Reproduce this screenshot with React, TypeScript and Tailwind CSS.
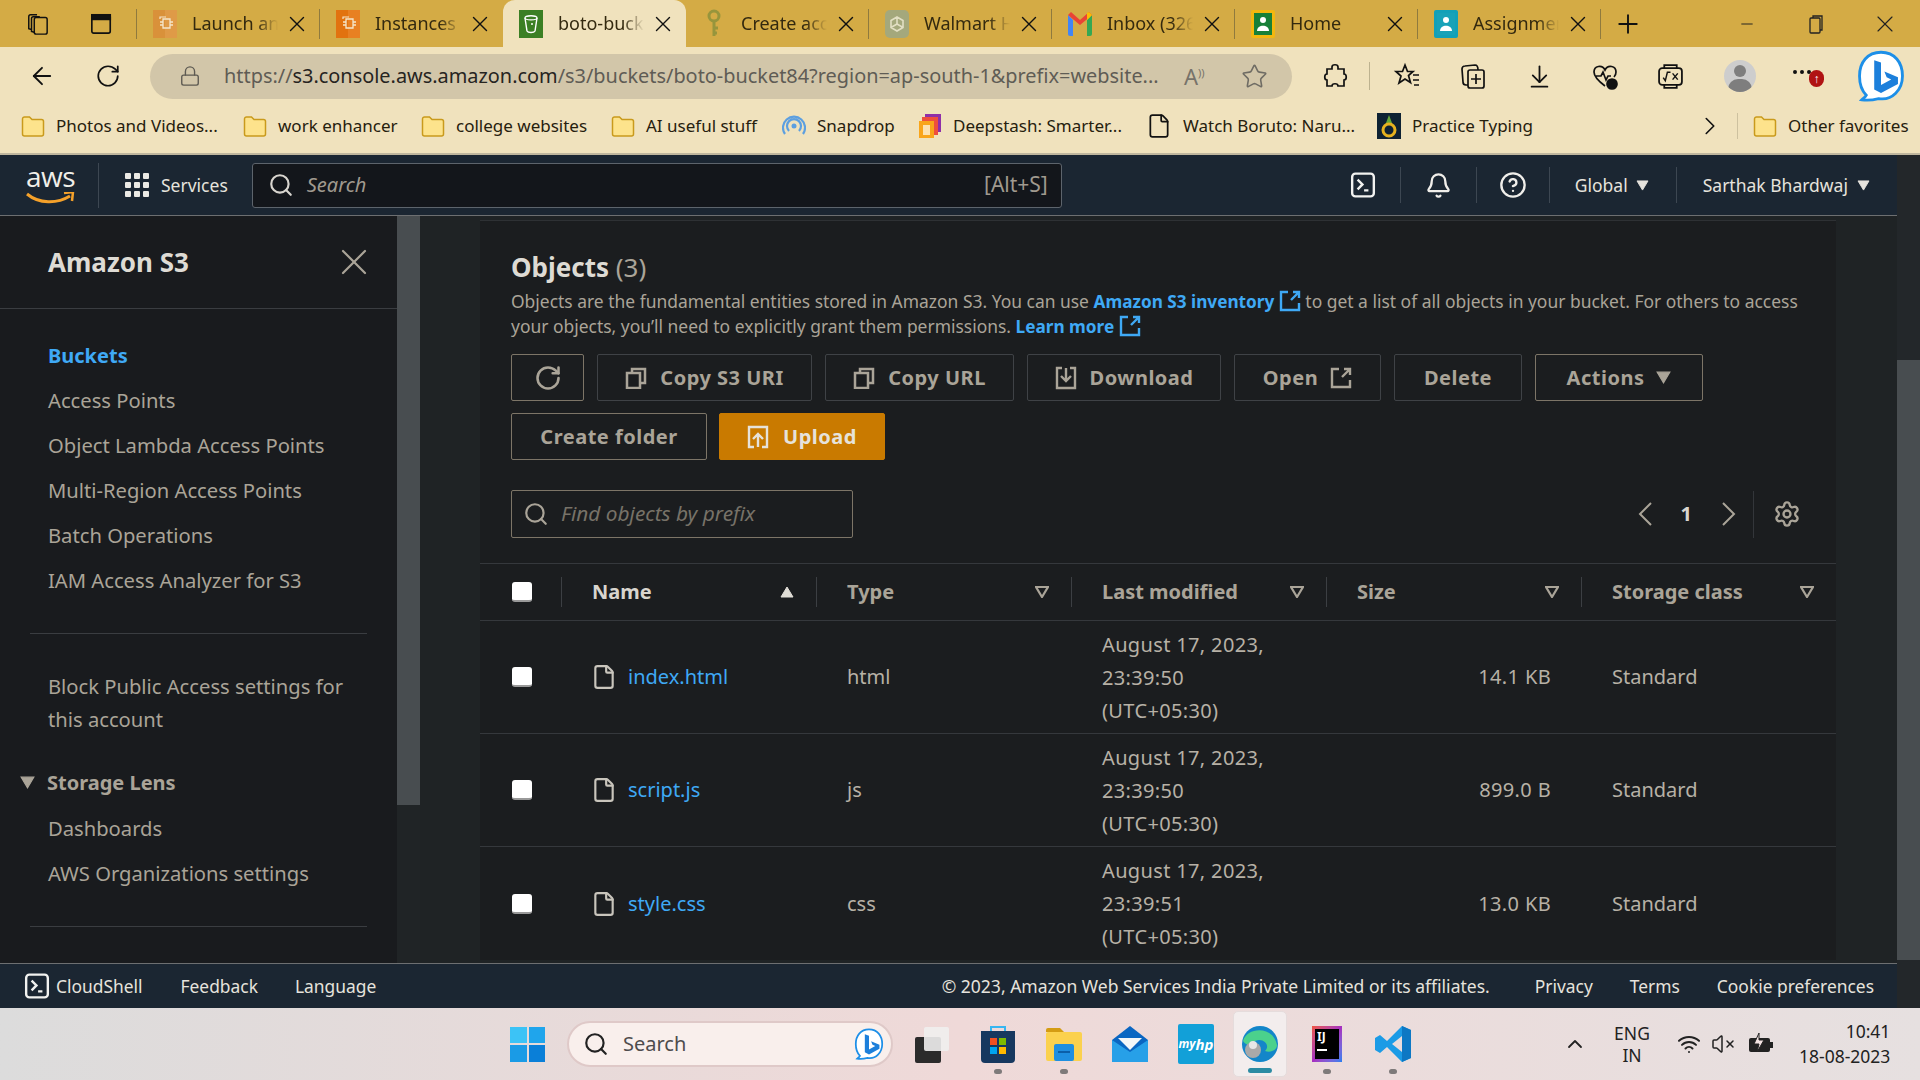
import React from "react";
import {
  ArrowLeft, RotateCw, Lock, Star, ArrowDownToLine, Search, Bell, CircleHelp, X,
  Settings, ChevronRight, File, Plus, Minus, ChevronUp, Wifi, VolumeX, Ellipsis,
} from "lucide-react";

const Tri = ({ up = false, hollow = false, s = 14, c = "#aaa498" }: { up?: boolean; hollow?: boolean; s?: number; c?: string }) => (
  <svg width={s} height={s - 2} viewBox="0 0 14 12" className="shrink-0">
    <polygon points={up ? "7,1 13,11 1,11" : "1,1 13,1 7,11"} fill={hollow ? "none" : c} stroke={c} strokeWidth={hollow ? 2.2 : 1} />
  </svg>
);

const Chip = ({ c1, c2 }: { c1: string; c2: string }) => (
  <svg width="24" height="28" viewBox="0 0 24 28" className="shrink-0">
    <rect width="24" height="28" fill={c1} />
    <rect x="12" width="12" height="28" fill={c2} opacity="0.6" />
    <path d="M10 9h7v9h-7zM7 12h3M7 15h3M17 12h3M17 15h3" stroke="#f5e6cc" strokeWidth="1.3" fill="none" />
    <path d="M7 9V7h6" stroke="#f5e6cc" strokeWidth="1.2" fill="none" />
  </svg>
);
const S3Icon = () => (
  <svg width="24" height="28" viewBox="0 0 24 28" className="shrink-0">
    <rect width="24" height="28" fill="#3b7f24" />
    <path d="M6 8c0-3 12-3 12 0l-2 13c-1 2-7 2-8 0z" fill="none" stroke="#fff" strokeWidth="1.4" />
    <path d="M6 8c0 2.500 12 2.500 12 0" stroke="#fff" strokeWidth="1.2" fill="none" />
    <circle cx="13" cy="14" r="1" fill="#fff" />
  </svg>
);
const KeyIcon = () => (
  <svg width="20" height="30" viewBox="0 0 20 30" className="shrink-0">
    <circle cx="10" cy="7" r="5" fill="none" stroke="#97953c" strokeWidth="3" />
    <path d="M10 12v15M10 19h4M10 24h3" stroke="#97953c" strokeWidth="3" />
  </svg>
);
const GptIcon = () => (
  <svg width="24" height="28" viewBox="0 0 24 28" className="shrink-0">
    <rect width="24" height="28" rx="5" fill="#a4a87c" />
    <path d="M12 7l6 3.500v7L12 21l-6-3.500v-7zM12 7v7l6 3.500M12 14l-6 3.500" fill="none" stroke="#e2dfc3" strokeWidth="1.6" />
  </svg>
);
const GmailIcon = () => (
  <svg width="24" height="24" viewBox="0 0 24 24" className="shrink-0">
    <path d="M0 3v19a2 2 0 0 0 2 2h3V8z" fill="#4285f4" />
    <path d="M24 3v19a2 2 0 0 1-2 2h-3V8z" fill="#34a853" />
    <path d="M0 3l12 10 12-10-3-3-9 8-9-8z" fill="#ea4335" />
    <path d="M19 8l5-5-3-3-2 1z" fill="#fbbc04" />
  </svg>
);
const ClassIcon = ({ c, b }: { c: string; b: string }) => (
  <svg width="24" height="28" viewBox="0 0 24 28" className="shrink-0">
    <rect width="24" height="28" rx="2" fill={b} />
    <rect x="3" y="3" width="18" height="22" fill={c} />
    <circle cx="12" cy="10" r="3" fill="#fff" />
    <path d="M6 21c0-7 12-7 12 0z" fill="#fff" />
  </svg>
);

const Fade = "[mask-image:linear-gradient(to_right,black_75%,transparent)]";

const Tab = ({ icon, label, active = false, sep = true }: { icon: React.ReactNode; label: string; active?: boolean; sep?: boolean }) => (
  <div className={`w-[183px] h-[47px] shrink-0 flex items-center pl-4 pr-[10px] ${active ? "bg-[#f0e2bd] rounded-t-xl" : ""}`}>
    <div className="w-[24px] flex justify-center shrink-0">{icon}</div>
    <span className={`ml-[15px] w-[86px] overflow-hidden whitespace-nowrap text-[18px] text-[#33290f] ${Fade}`}>{label}</span>
    <X size={26} strokeWidth={1.3} className="ml-auto text-[#111]" />
    {sep && <div className="w-px h-[30px] bg-[#8f7a3e] ml-[9px] -mr-[10px] shrink-0" />}
  </div>
);

const FolderIcon = () => (
  <svg width="24" height="24" viewBox="0 0 24 24" className="shrink-0">
    <path d="M1.500 5a2 2 0 0 1 2-2h5l2.500 2.500h9.500a2 2 0 0 1 2 2V20a2 2 0 0 1-2 2h-17a2 2 0 0 1-2-2z" fill="#fde38c" stroke="#c99a1c" strokeWidth="1.5" />
  </svg>
);

const Book = ({ icon, label, w }: { icon: React.ReactNode; label: string; w: string }) => (
  <div className={`flex items-center gap-[11px] shrink-0 ${w}`}>
    {icon}
    <span className="text-[17px] text-[#26200e] whitespace-nowrap">{label}</span>
  </div>
);

const Bing = ({ s = 46 }: { s?: number }) => (
  <svg width={s} height={s} viewBox="0 0 46 46" className="shrink-0">
    <path d="M23 2C11 2 4 11 4 23c0 7 2 13 6 17-1 2-3 3-4 4 6 1 11 0 15-1 12 2 21-8 21-20S35 2 23 2z" fill="#fff" stroke="#1d8fe8" strokeWidth="2.5" />
    <path d="M17 9l6 2v20l9-5-4-2-2-5 12 5v6l-15 8-6-3z" fill="#1c7fdb" />
  </svg>
);

const Divider = ({ h = "h-[30px]", c = "bg-[#3d4752]" }: { h?: string; c?: string }) => <div className={`w-px ${h} ${c} shrink-0`} />;

const Terminal = ({ s = 26 }: { s?: number }) => (
  <svg width={s} height={s} viewBox="0 0 24 24" className="shrink-0" fill="none" stroke="#f2f2f0" strokeWidth="2.200">
    <rect x="2" y="1.500" width="20" height="21" rx="3" />
    <path d="M7 7l4.500 4.500L7 16M13 17h4" />
  </svg>
);

const Nav = ({ children, active = false }: { children: React.ReactNode; active?: boolean }) => (
  <div className={`h-[45px] flex items-center pl-[48px] whitespace-nowrap ${active ? "font-bold text-[#3fa9f5] text-[20px]" : "text-[#aaa498] text-[20.2px]"}`}>{children}</div>
);

const CopyIco = () => (
  <svg width="22" height="22" viewBox="0 0 22 22" fill="none" stroke="#aaa498" strokeWidth="2.500" className="shrink-0">
    <path d="M7 5V2h13v14h-4" /><rect x="2" y="6" width="13" height="15" />
  </svg>
);
const ExtIco = ({ c = "#aaa498", s = 22 }: { c?: string; s?: number }) => (
  <svg width={s} height={s} viewBox="0 0 22 22" fill="none" stroke={c} strokeWidth="2.400" className="shrink-0 inline-block align-[-4px]">
    <path d="M9 2H2v18h18v-7M12 10l8-8M14 2h6v6" />
  </svg>
);

const Btn = ({ w, children, strong = false, primary = false, gap = "gap-[12px]" }: { w: string; children: React.ReactNode; strong?: boolean; primary?: boolean; gap?: string }) => (
  <div className={`${w} ${gap} h-[47px] shrink-0 rounded-[2px] border flex items-center justify-center text-[20px] tracking-[0.5px] font-bold ${primary ? "bg-[#c97a00] border-[#c97a00] text-[#e6e2da]" : strong ? "border-[#7d7567] text-[#aaa498]" : "border-[#3f4246] text-[#aaa498]"}`}>
    {children}
  </div>
);

const Head = ({ label, up = false }: { label: string; up?: boolean }) => (
  <div className="flex items-center justify-between h-[30px] border-l border-[#3c3f43] pl-[30px] pr-[22px]">
    <span className={`text-[20px] font-bold ${up ? "text-[#d8d5ce]" : "text-[#aaa498]"}`}>{label}</span>
    {up ? <Tri up c="#e0ddd6" /> : <Tri hollow />}
  </div>
);

const Check = () => <div className="w-[20px] h-[20px] bg-white rounded-[3px] border-b-2 border-[#999]" />;

const rows = [
  { n: "index.html", t: "html", d: "23:39:50", s: "14.1 KB" },
  { n: "script.js", t: "js", d: "23:39:50", s: "899.0 B" },
  { n: "style.css", t: "css", d: "23:39:51", s: "13.0 KB" },
];

const Row = ({ r, last }: { r: (typeof rows)[number]; last: boolean }) => (
  <div className={`grid grid-cols-[81px_repeat(5,255px)] items-center text-[20px] text-[#b7b1a6] h-[113px] ${last ? "" : "border-b border-[#35383c]"}`}>
    <div className="pl-[32px]"><Check /></div>
    <div className="pl-[30px] flex items-center gap-[11px]">
      <File size={26} strokeWidth={2} className="text-[#c9c5bc]" />
      <span className="text-[#3fa9f5]">{r.n}</span>
    </div>
    <div className="pl-[31px]">{r.t}</div>
    <div className="pl-[31px] leading-[33px] tracking-[0.35px]">August 17, 2023,<br />{r.d}<br />(UTC+05:30)</div>
    <div className="pr-[30px] text-right tracking-[0.35px]">{r.s}</div>
    <div className="pl-[31px]">Standard</div>
  </div>
);

const Task = ({ w = "w-[66px]", children, dot = false }: { w?: string; children: React.ReactNode; dot?: boolean }) => (
  <div className={`${w} h-[72px] relative shrink-0 flex items-center justify-center`}>
    {children}
    {dot && <div className="absolute bottom-[6px] left-1/2 -ml-[4px] w-[8px] h-[5px] rounded-full bg-[#7e7a7a]" />}
  </div>
);

export default function App() {
  return (
    <div className="w-[1920px] h-[1080px] overflow-hidden flex flex-col font-['Noto_Sans',sans-serif]">
      {/* tab strip */}
      <div className="h-[47px] shrink-0 bg-[#d4ab45] flex items-center">
        <div className="w-[137px] h-[47px] shrink-0 flex items-center pl-[26px] gap-[40px]">
          <svg width="26" height="26" viewBox="0 0 26 26" fill="none" stroke="#111" strokeWidth="1.600"><rect x="9" y="6" width="14" height="18" rx="2" /><path d="M9 22l-3-1V7a2 2 0 0 1 2-2h7M6 19l-3-1V5a2 2 0 0 1 2-2h7" /></svg>
          <svg width="24" height="26" viewBox="0 0 24 26" fill="none" stroke="#111" strokeWidth="1.800"><rect x="2" y="3" width="20" height="20" rx="2" /><rect x="2" y="3" width="20" height="5" fill="#111" /></svg>
          <div className="w-px h-[30px] bg-[#8f7a3e] -ml-[16px] shrink-0" />
        </div>
        <Tab icon={<Chip c1="#d9913a" c2="#e3a050" />} label="Launch an" />
        <Tab icon={<Chip c1="#e2720f" c2="#ec8a2e" />} label="Instances |" sep={false} />
        <Tab active icon={<S3Icon />} label="boto-bucket" sep={false} />
        <Tab icon={<KeyIcon />} label="Create acco" />
        <Tab icon={<GptIcon />} label="Walmart H" />
        <Tab icon={<GmailIcon />} label="Inbox (326)" />
        <Tab icon={<ClassIcon c="#188038" b="#f3b70f" />} label="Home" />
        <Tab icon={<ClassIcon c="#18a2b8" b="#12a0b8" />} label="Assignment" />
        <Plus size={30} strokeWidth={1.5} className="ml-[12px] text-[#111]" />
        <Minus size={18} strokeWidth={1.3} className="ml-[95px] text-[#222]" />
        <svg width="16" height="20" viewBox="0 0 16 20" fill="none" stroke="#222" strokeWidth="1.300" className="ml-[52px]"><rect x="2" y="4" width="10" height="15" rx="1" /><path d="M5 4V2h9v14h-2" /></svg>
        <X size={28} strokeWidth={1} className="ml-[47px] text-[#222]" />
      </div>

      {/* toolbar */}
      <div className="h-[58px] shrink-0 bg-[#f0e2bd] flex items-center pl-[28px]">
        <ArrowLeft size={28} strokeWidth={1.6} className="text-[#111]" />
        <RotateCw size={26} strokeWidth={1.6} className="ml-[39px] text-[#111]" />
        <div className="ml-[29px] w-[1142px] h-[45px] rounded-full bg-[#d2c6a9] flex items-center pl-[29px]">
          <Lock size={22} strokeWidth={1.5} className="text-[#5d5a52]" />
          <span className="ml-[23px] w-[945px] text-[19.9px] text-[#5f5c55] whitespace-nowrap overflow-hidden"><span className="text-[#5f5c55]">https://</span><span className="text-[#26241f]">s3.console.aws.amazon.com</span>/s3/buckets/boto-bucket84?region=ap-south-1&amp;prefix=website...</span>
          <span className="ml-[15px] text-[22px] text-[#77736a] leading-none">A<span className="text-[11px] align-super">))</span></span>
          <Star size={27} strokeWidth={1.4} className="ml-[36px] text-[#6f6c64]" />
        </div>
        <svg width="25" height="27" viewBox="0 0 25 27" fill="none" stroke="#111" strokeWidth="1.700" className="ml-[31px] shrink-0"><path d="M9 4c0-3 6-3 6 0v2h6v5c3 0 3 6 0 6v6h-6c0-3-6-3-6 0H4v-6c-3 0-3-6 0-6V6h5z" /></svg>
        <div className="ml-[21px]"><Divider h="h-[28px]" c="bg-[#bdb28f]" /></div>
        <svg width="28" height="28" viewBox="0 0 28 28" fill="none" stroke="#111" strokeWidth="1.700" className="ml-[23px] shrink-0"><path d="M12 3l2.500 6.500H20l-4.500 4 2 7L12 17l-6 4 2-7-5-4.500h6.500zM20 13h6M20 18h6M21 23h5" /></svg>
        <svg width="28" height="28" viewBox="0 0 28 28" fill="none" stroke="#111" strokeWidth="1.700" className="ml-[38px] shrink-0"><rect x="9" y="8" width="16" height="18" rx="2" /><path d="M9 23H7a3 3 0 0 1-3-3L3 7a3 3 0 0 1 3-3l10-1c2 0 3 2 3 5M17 12v10M12 17h10" /></svg>
        <ArrowDownToLine size={27} strokeWidth={1.6} className="ml-[39px] text-[#111]" />
        <svg width="27" height="27" viewBox="0 0 27 27" fill="none" stroke="#111" strokeWidth="1.700" className="ml-[39px] shrink-0"><path d="M13 23C5 17 2 13 2 9c0-6 8-8 11-2 3-6 11-4 11 2 0 2-1 4-2 5M3 13h6l2-4 3 8 2-4h3" /><circle cx="20" cy="21" r="5" fill="#111" /></svg>
        <svg width="27" height="27" viewBox="0 0 26 26" fill="none" stroke="#111" strokeWidth="1.700" className="ml-[38px] shrink-0"><rect x="2" y="5" width="22" height="16" rx="3" /><path d="M7 5V2h12v3M7 21v3h12v-3" /><path d="M6 14l2 3 2-8h3M15 10l5 6M20 10l-5 6" strokeWidth="1.400" /></svg>
        <div className="ml-[40px] w-[32px] h-[32px] rounded-full bg-[#cdcdcd] relative overflow-hidden shrink-0">
          <div className="absolute left-[10px] top-[5px] w-[12px] h-[12px] rounded-full bg-[#7e7e7e]" />
          <div className="absolute left-[4px] top-[19px] w-[24px] h-[20px] rounded-full bg-[#7e7e7e]" />
        </div>
        <div className="ml-[37px] relative w-[40px] h-[34px] shrink-0">
          <Ellipsis size={24} className="absolute left-[-3px] top-[1px] text-[#111]" />
          <div className="absolute left-[16px] top-[11px] w-[15px] h-[17px] rounded-full bg-[#b01313] text-white text-[12px] font-bold flex items-center justify-center">↑</div>
        </div>
        <div className="ml-[22px]"><Bing s={52} /></div>
      </div>

      {/* bookmarks */}
      <div className="h-[50px] shrink-0 bg-[#f0e2bd] border-b-2 border-[#bfb69e] flex items-center pl-[21px] pb-[6px]">
        <Book w="w-[222px]" icon={<FolderIcon />} label="Photos and Videos..." />
        <Book w="w-[178px]" icon={<FolderIcon />} label="work enhancer" />
        <Book w="w-[190px]" icon={<FolderIcon />} label="college websites" />
        <Book w="w-[171px]" icon={<FolderIcon />} label="AI useful stuff" />
        <Book w="w-[136px]" icon={
          <svg width="24" height="26" viewBox="0 0 24 26" fill="none" stroke="#5c9fe0" strokeWidth="2.200" className="shrink-0"><path d="M3 21a11 11 0 1 1 18 0M7 18a7 7 0 1 1 10 0" /><circle cx="12" cy="13" r="2.500" fill="#5c9fe0" stroke="none" /></svg>
        } label="Snapdrop" />
        <Book w="w-[228px]" icon={
          <svg width="24" height="26" viewBox="0 0 24 26" className="shrink-0"><rect x="7" y="1" width="16" height="18" fill="#8f2fa8" /><rect x="4" y="4" width="16" height="18" fill="#ef4f3c" /><rect x="1" y="8" width="15" height="17" fill="#f9a51a" /><rect x="5" y="12" width="7" height="10" fill="#fde2b0" /></svg>
        } label="Deepstash: Smarter..." />
        <Book w="w-[231px]" icon={<File size={26} strokeWidth={1.6} className="text-[#111]" />} label="Watch Boruto: Naru..." />
        <Book w="w-[318px]" icon={
          <svg width="24" height="26" viewBox="0 0 24 26" className="shrink-0"><rect width="24" height="26" fill="#0e2233" /><path d="M12 2l3 8h-6z" fill="#65a83a" /><circle cx="12" cy="17" r="6" fill="none" stroke="#e5b21f" strokeWidth="3" /></svg>
        } label="Practice Typing" />
        <ChevronRight size={30} strokeWidth={1.3} className="text-[#111]" />
        <div className="ml-[12px]"><Divider h="h-[26px]" c="bg-[#cdc19f]" /></div>
        <div className="ml-[15px]"><Book w="w-auto" icon={<FolderIcon />} label="Other favorites" /></div>
      </div>

      {/* page */}
      <div className="flex-1 min-h-0 flex bg-[#23272a]">
        <div className="w-[1897px] shrink-0 flex flex-col">
          {/* aws header */}
          <div className="h-[61px] shrink-0 bg-[#1b2632] border-b border-[#6d6f71] flex items-center text-[#e6e3dd]">
            <div className="w-[99px] h-[45px] shrink-0 border-r border-[#3d4752] pl-[26px] relative">
              <span className="block text-[28px] leading-[27px] text-[#f1efe9] tracking-[-0.5px] font-['Open_Sans',sans-serif]">aws</span>
              <svg width="50" height="14" viewBox="0 0 50 14" className="absolute left-[25px] top-[29px]"><path d="M2 2c12 10 30 10 43 2" fill="none" stroke="#f5a12a" strokeWidth="3" /><path d="M39 1l9-1-1 9" fill="none" stroke="#f5a12a" strokeWidth="2.500" /></svg>
            </div>
            <div className="ml-[26px] w-[24px] h-[24px] grid grid-cols-3 gap-[2.500px] shrink-0">
              {Array.from({ length: 9 }).map((_, i) => <div key={i} className="bg-[#eceae5] rounded-[1px]" />)}
            </div>
            <span className="ml-[12px] text-[17.5px] whitespace-nowrap">Services</span>
            <div className="ml-[24px] w-[810px] h-[45px] shrink-0 rounded-[3px] bg-[#13161b] border border-[#5d646c] flex items-center pl-[15px] pr-[13px]">
              <Search size={26} strokeWidth={2} className="text-[#d8d5cf]" />
              <span className="ml-[13px] italic text-[20px] text-[#a09a8f]">Search</span>
              <span className="ml-auto text-[21px] text-[#a09a8f]">[Alt+S]</span>
            </div>
            <div className="ml-[288px]"><Terminal /></div>
            <div className="ml-[24px]"><Divider h="h-[36px]" /></div>
            <Bell size={27} strokeWidth={2} className="ml-[24px] text-[#f0eeea]" />
            <div className="ml-[24px]"><Divider h="h-[36px]" /></div>
            <CircleHelp size={28} strokeWidth={2} className="ml-[22px] text-[#f0eeea]" />
            <div className="ml-[22px]"><Divider h="h-[36px]" /></div>
            <span className="ml-[25px] text-[17.5px]">Global</span>
            <div className="ml-[8px]"><Tri s={13} c="#e6e3dd" /></div>
            <div className="ml-[27px]"><Divider h="h-[36px]" /></div>
            <span className="ml-[26px] text-[17.5px] whitespace-nowrap">Sarthak Bhardwaj</span>
            <div className="ml-[9px]"><Tri s={13} c="#e6e3dd" /></div>
          </div>

          {/* console body */}
          <div className="flex-1 min-h-0 flex">
            <div className="w-[397px] shrink-0 bg-[#191b1e]">
              <div className="h-[93px] border-b border-[#3a3d41] flex items-center justify-between pl-[48px] pr-[21px]">
                <span className="text-[26px] font-bold text-[#dedbd4]">Amazon S3</span>
                <X size={44} strokeWidth={1.2} className="text-[#aaa498]" />
              </div>
              <div className="mt-[24px]">
                <Nav active>Buckets</Nav>
                <Nav>Access Points</Nav>
                <Nav>Object Lambda Access Points</Nav>
                <Nav>Multi-Region Access Points</Nav>
                <Nav>Batch Operations</Nav>
                <Nav>IAM Access Analyzer for S3</Nav>
              </div>
              <div className="mx-[30px] mt-[30px] border-t border-[#3a3d41]" />
              <div className="mt-[36px] pl-[48px] text-[20.2px] leading-[33px] text-[#aaa498]">Block Public Access settings for<br />this account</div>
              <div className="mt-[30px] h-[33px] flex items-center pl-[20px] gap-[12px] text-[20px] font-bold text-[#aaa498]"><Tri s={15} />Storage Lens</div>
              <div className="mt-[7px]">
                <Nav>Dashboards</Nav>
                <Nav>AWS Organizations settings</Nav>
              </div>
              <div className="mx-[30px] mt-[30px] border-t border-[#3a3d41]" />
            </div>
            <div className="w-[23px] shrink-0 bg-[#202426]">
              <div className="h-[589px] bg-[#484d50]" />
            </div>
            <div className="w-[60px] shrink-0 bg-[#1f2325]" />
            <div className="w-[1356px] shrink-0 bg-[#1f2325] pt-[4px]">
              <div className="h-[740px] bg-[#1b1d1f] border-t border-[#2e3134] overflow-hidden">
                <div className="pl-[31px] pr-[30px] pt-[29px]">
                  <div className="text-[26px] leading-[34px] font-bold text-[#dedbd4]">Objects <span className="font-normal text-[#aaa498]">(3)</span></div>
                  <p className="mt-[5px] text-[17.45px] leading-[25px] text-[#aaa498]">
                    Objects are the fundamental entities stored in Amazon S3. You can use <span className="font-bold text-[#3fa9f5] text-[17.2px]">Amazon S3 inventory <ExtIco c="#3fa9f5" s={22} /></span> to get a list of all objects in your bucket. For others to access your objects, you’ll need to explicitly grant them permissions. <span className="font-bold text-[#3fa9f5] text-[17.2px]">Learn more <ExtIco c="#3fa9f5" s={22} /></span>
                  </p>
                  <div className="mt-[15px] flex gap-[13px]">
                    <Btn w="w-[73px]" strong><RotateCw size={28} strokeWidth={2.2} /></Btn>
                    <Btn w="w-[215px]" gap="gap-[13px]"><CopyIco />Copy S3 URI</Btn>
                    <Btn w="w-[189px]" gap="gap-[13px]"><CopyIco />Copy URL</Btn>
                    <Btn w="w-[194px]" gap="gap-[13px]">
                      <svg width="22" height="24" viewBox="0 0 22 24" fill="none" stroke="#aaa498" strokeWidth="2.400"><path d="M7 2H2v20h18V2h-5M11 2v12M6 10l5 5 5-5" /></svg>
                      Download
                    </Btn>
                    <Btn w="w-[147px]">Open <ExtIco /></Btn>
                    <Btn w="w-[128px]">Delete</Btn>
                    <Btn w="w-[168px]" strong>Actions <Tri s={15} /></Btn>
                  </div>
                  <div className="mt-[12px] flex gap-[12px]">
                    <Btn w="w-[196px]" strong>Create folder</Btn>
                    <Btn w="w-[166px]" primary gap="gap-[14px]">
                      <svg width="22" height="24" viewBox="0 0 22 24" fill="none" stroke="#e6e2da" strokeWidth="2.400"><path d="M7 22H2V2h18v20h-5M11 22V10M6 14l5-5 5 5" /></svg>
                      Upload
                    </Btn>
                  </div>
                  <div className="mt-[30px] flex items-center pr-[5px]">
                    <div className="w-[342px] h-[48px] rounded-[2px] border border-[#7d7567] flex items-center pl-[11px]">
                      <Search size={26} strokeWidth={2} className="text-[#aaa498]" />
                      <span className="ml-[12px] italic text-[20.8px] text-[#777268]">Find objects by prefix</span>
                    </div>
                    <svg width="16" height="26" viewBox="0 0 16 26" fill="none" stroke="#aaa498" strokeWidth="2" className="ml-auto shrink-0"><path d="M14 2L3 13l11 11" /></svg>
                    <span className="ml-[28px] text-[20px] font-bold text-[#d8d5ce]">1</span>
                    <svg width="16" height="26" viewBox="0 0 16 26" fill="none" stroke="#aaa498" strokeWidth="2" className="ml-[29px] shrink-0"><path d="M2 2l11 11L2 24" /></svg>
                    <div className="ml-[16px]"><Divider h="h-[47px]" c="bg-[#33363a]" /></div>
                    <Settings size={28} strokeWidth={2} className="ml-[19px] text-[#aaa498]" />
                  </div>
                </div>
                <div className="mt-[25px] border-t border-[#35383c]">
                  <div className="grid grid-cols-[81px_repeat(5,255px)] items-center h-[57px] border-b border-[#35383c]">
                    <div className="pl-[32px]"><Check /></div>
                    <Head label="Name" up />
                    <Head label="Type" />
                    <Head label="Last modified" />
                    <Head label="Size" />
                    <Head label="Storage class" />
                  </div>
                  {rows.map((r, i) => <Row key={r.n} r={r} last={i === 2} />)}
                </div>
              </div>
            </div>
            <div className="w-[61px] shrink-0 bg-[#1f2325]" />
          </div>

          {/* footer */}
          <div className="h-[45px] shrink-0 bg-[#1b2632] border-t border-[#6d6f71] flex items-center text-[17.4px] text-[#e6e3dd] pl-[24px] pr-[23px] whitespace-nowrap">
            <Terminal />
            <span className="ml-[6px]">CloudShell</span>
            <span className="ml-[38px]">Feedback</span>
            <span className="ml-[37px]">Language</span>
            <span className="ml-auto text-[17.55px]">© 2023, Amazon Web Services India Private Limited or its affiliates.</span>
            <span className="ml-[45px]">Privacy</span>
            <span className="ml-[37px]">Terms</span>
            <span className="ml-[37px]">Cookie preferences</span>
          </div>
        </div>
        <div className="w-[23px] shrink-0 pt-[205px]">
          <div className="h-[600px] bg-[#484d50]" />
        </div>
      </div>

      {/* taskbar */}
      <div className="h-[72px] shrink-0 flex items-center bg-gradient-to-r from-[#dcdcdc] via-[#efd9d8] to-[#e6e0e0] pl-[510px] text-[#222]">
        <div className="w-[35px] h-[35px] grid grid-cols-2 gap-[2px] shrink-0">
          <div className="bg-[#3cc3f6]" /><div className="bg-[#1fa5ec]" /><div className="bg-[#1a9be6]" /><div className="bg-[#0a7fd8]" />
        </div>
        <div className="ml-[22px] w-[326px] h-[46px] rounded-full bg-[#f9efec] border-2 border-[#dfc9c8] flex items-center pl-[14px] pr-[6px] shrink-0">
          <Search size={26} strokeWidth={2} className="text-[#222]" />
          <span className="ml-[14px] text-[20px] text-[#4e4c4c]">Search</span>
          <div className="ml-auto"><Bing s={32} /></div>
        </div>
        <Task w="w-[66px] ml-[6px]">
          <div className="relative w-[34px] h-[34px]">
            <div className="absolute left-0 top-[10px] w-[26px] h-[26px] bg-[#2b2b2b] rounded-[2px]" />
            <div className="absolute left-[9px] top-0 w-[25px] h-[24px] bg-[#efeeee]/90 rounded-[2px]" />
          </div>
        </Task>
        <Task dot>
          <svg width="34" height="38" viewBox="0 0 34 38"><path d="M0 6h34v28a4 4 0 0 1-4 4H4a4 4 0 0 1-4-4z" fill="#17385f" /><path d="M10 6V2h14v4" fill="none" stroke="#38b6f1" strokeWidth="2" /><rect x="9" y="13" width="7" height="7" fill="#f25022" /><rect x="18" y="13" width="7" height="7" fill="#7fba00" /><rect x="9" y="22" width="7" height="7" fill="#00a4ef" /><rect x="18" y="22" width="7" height="7" fill="#ffb900" /></svg>
        </Task>
        <Task dot>
          <svg width="36" height="34" viewBox="0 0 36 34"><path d="M0 3a2 2 0 0 1 2-2h12l4 4H0z" fill="#d49c13" /><rect y="5" width="36" height="29" rx="2" fill="#fbd14e" /><rect x="8" y="17" width="20" height="17" rx="2" fill="#1f8fe0" /><rect x="12" y="24" width="12" height="2" fill="#0b5fa8" /></svg>
        </Task>
        <Task>
          <svg width="36" height="36" viewBox="0 0 36 36"><path d="M18 0L0 14v22h36V14z" fill="#0a66c2" /><path d="M6 12h24L18 24z" fill="#f4f6f8" /><path d="M0 14l18 12 18-12v22H0z" fill="#27a0e8" /></svg>
        </Task>
        <Task>
          <div className="w-[36px] h-[40px] bg-[#12a0d8] rounded-[2px] flex items-center justify-center text-white text-[12px] italic font-bold">my<span className="text-[15px]">hp</span></div>
        </Task>
        <Task w="w-[62px]">
          <div className="relative w-[54px] h-[66px] rounded-[5px] bg-[#f3eded] border border-[#e5dcdc] flex items-center justify-center">
            <svg width="38" height="38" viewBox="0 0 38 38"><circle cx="19" cy="19" r="18" fill="#1386c9" /><path d="M2 16C6 2 32 0 36 20c0 5-6 8-12 6 6-6-2-14-10-10-5 2-8 6-12 0z" fill="#4bd18c" /><circle cx="12" cy="25" r="8" fill="#a9a9a9" /><circle cx="12" cy="20" r="4" fill="#e6e6e6" /></svg>
            <div className="absolute bottom-[3px] left-1/2 -ml-[12px] w-[24px] h-[5px] rounded-full bg-[#2b8ba3]" />
          </div>
        </Task>
        <Task w="w-[66px] ml-[3px]" dot>
          <div className="w-[30px] h-[36px] bg-gradient-to-br from-[#f0533b] via-[#a62ec0] to-[#1d7ff0] p-[3px]">
            <div className="w-full h-full bg-black text-white text-[12px] font-bold pl-[2px] leading-[16px]">IJ<div className="w-[10px] h-[2px] bg-white mt-[4px]" /></div>
          </div>
        </Task>
        <Task dot>
          <svg width="38" height="38" viewBox="0 0 38 38"><path d="M28 1l9 4v28l-9 4L13 22l-7 6-5-3V13l5-3 7 6zM28 11L18 19l10 8z" fill="#1b9be6" /><path d="M28 1l9 4v28l-9 4z" fill="#0d78c4" /></svg>
        </Task>
        <ChevronUp size={24} strokeWidth={1.8} className="ml-[137px] text-[#222]" />
        <div className="ml-[15px] w-[60px] text-center text-[17.5px] leading-[22px] text-[#222]">ENG<br />IN</div>
        <Wifi size={24} strokeWidth={2} className="ml-[15px] text-[#222]" />
        <VolumeX size={24} strokeWidth={1.5} className="ml-[10px] text-[#222]" />
        <svg width="26" height="26" viewBox="0 0 26 26" className="ml-[13px]"><rect x="1" y="7" width="21" height="14" rx="2" fill="#222" /><rect x="22" y="11" width="3" height="6" fill="#222" /><path d="M11 2L6 13h5l-2 8 7-12h-5z" fill="#f3e3e2" stroke="#222" /></svg>
        <div className="ml-[25px] flex flex-col items-end text-[17.5px] leading-[25px] text-[#222] whitespace-nowrap"><span>10:41</span><span>18-08-2023</span></div>
      </div>
    </div>
  );
}
